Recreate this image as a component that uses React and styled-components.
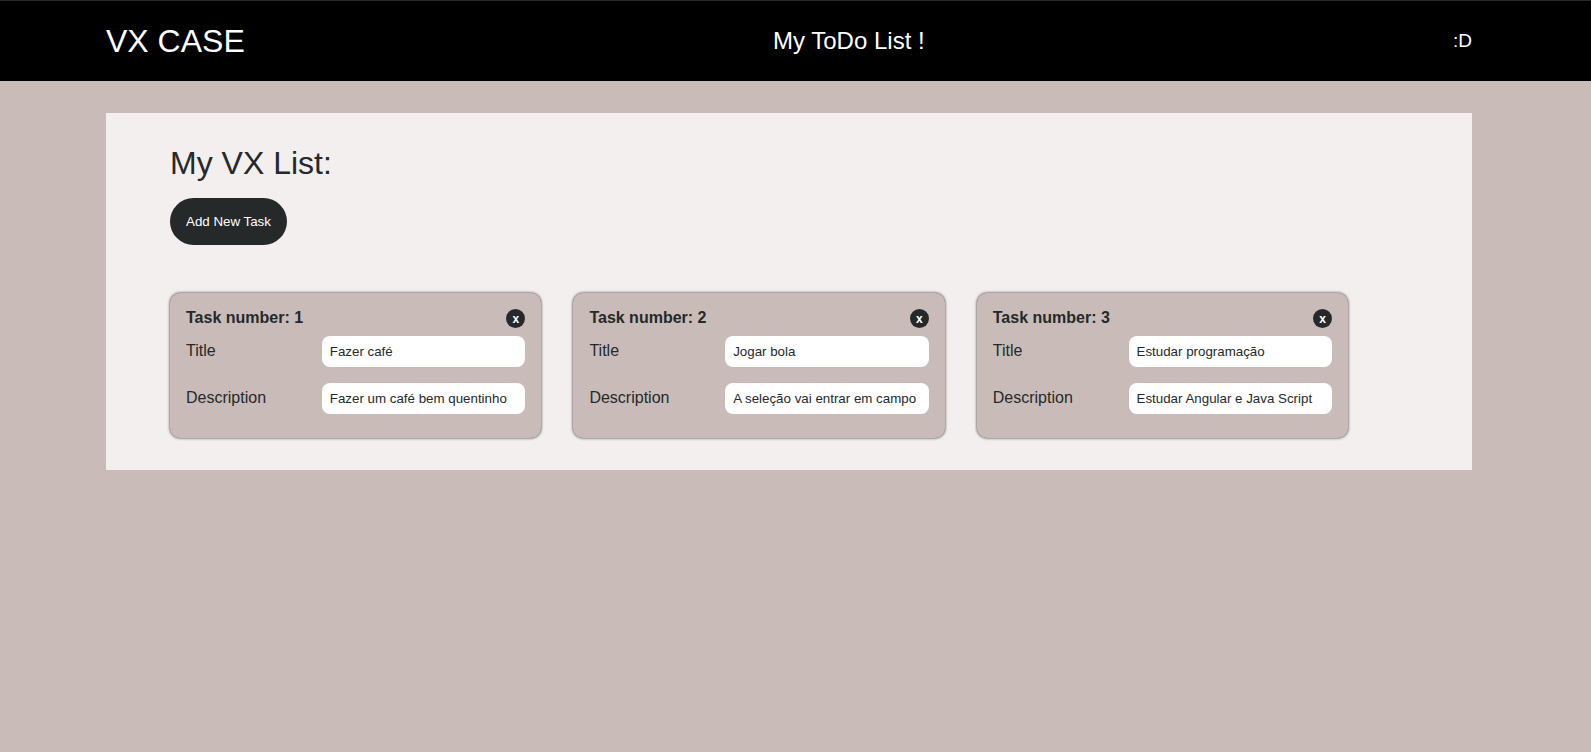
import React, { useState } from "react";
import styled, { createGlobalStyle } from "styled-components";

const GlobalStyle = createGlobalStyle`
  *, *::before, *::after { box-sizing: border-box; }
  body {
    margin: 0;
    background: #c9bcb8;
    color: #25292a;
    font-family: "Liberation Sans", Arial, sans-serif;
    font-size: 16px;
    line-height: 24px;
  }
  button, input { font-family: inherit; }
`;

const Header = styled.header`
  display: flex;
  align-items: center;
  justify-content: space-between;
  min-height: 81px;
  padding: 0 119px 0 106px;
  border-top: 1px solid #25292a;
  background: #000;
  color: #fff;
`;

const Brand = styled.div`
  font-size: 32px;
  line-height: 40px;
`;

const PageName = styled.div`
  font-size: 24px;
  line-height: 32px;
`;

const Smiley = styled.div`
  font-size: 19px;
  line-height: 24px;
`;

const Panel = styled.main`
  margin: 32px 119px 32px 106px;
  padding: 32px 64px;
  background: #f3efee;
`;

const Heading = styled.h1`
  margin: 0 0 16px;
  font-size: 32px;
  font-weight: 400;
  line-height: 37px;
`;

const AddButton = styled.button`
  display: block;
  height: 47px;
  padding: 0 16px;
  border: 0;
  border-radius: 24px;
  background: #25292a;
  color: #fff;
  font-weight: 400;
  cursor: pointer;
`;

const TaskList = styled.section`
  display: flex;
  flex-wrap: wrap;
  gap: 32px;
  margin-top: 48px;
`;

const Card = styled.article`
  flex: 0 0 30%;
  padding: 16px 16px 24px;
  border-radius: 10px;
  background: #c9bcb8;
  box-shadow: 0 0 3px #25292a;
`;

const CardHeader = styled.div`
  display: flex;
  align-items: flex-start;
  justify-content: space-between;
  height: 27px;
`;

const CardTitle = styled.h2`
  margin: 0;
  font-size: 16px;
  line-height: 18px;
`;

const RemoveButton = styled.button`
  width: 19px;
  height: 19px;
  padding: 0;
  border: 0;
  border-radius: 50%;
  background: #25292a;
  color: #fff;
  font-size: 12px;
  font-weight: 700;
  line-height: 18px;
  cursor: pointer;
`;

const Fields = styled.div`
  display: grid;
  gap: 16px;
`;

const Field = styled.div`
  display: grid;
  grid-template-columns: 2fr 3fr;
  align-items: center;
`;

const Label = styled.label`
  line-height: 30px;
  align-self: start;
`;

const TextInput = styled.input`
  width: 100%;
  height: 31px;
  padding: 0 8px;
  border: 0;
  border-radius: 8px;
  background: #fff;
  color: #25292a;
`;

const initialTasks = [
  { id: 1, title: "Fazer café", description: "Fazer um café bem quentinho" },
  { id: 2, title: "Jogar bola", description: "A seleção vai entrar em campo" },
  { id: 3, title: "Estudar programação", description: "Estudar Angular e Java Script" },
];

function TaskField({ id, label, value, onChange }) {
  return (
    <Field>
      <Label htmlFor={id}>{label}</Label>
      <TextInput id={id} value={value} onChange={(e) => onChange(e.target.value)} />
    </Field>
  );
}

function TaskCard({ task, number, onChange, onRemove }) {
  return (
    <Card>
      <CardHeader>
        <CardTitle>Task number: {number}</CardTitle>
        <RemoveButton type="button" onClick={onRemove}>x</RemoveButton>
      </CardHeader>
      <Fields>
        <TaskField
          id={`title-${task.id}`}
          label="Title"
          value={task.title}
          onChange={(title) => onChange({ ...task, title })}
        />
        <TaskField
          id={`description-${task.id}`}
          label="Description"
          value={task.description}
          onChange={(description) => onChange({ ...task, description })}
        />
      </Fields>
    </Card>
  );
}

export default function App() {
  const [tasks, setTasks] = useState(initialTasks);
  const add = () =>
    setTasks((list) => [...list, { id: Date.now(), title: "", description: "" }]);
  const update = (next) =>
    setTasks((list) => list.map((t) => (t.id === next.id ? next : t)));
  const remove = (id) => setTasks((list) => list.filter((t) => t.id !== id));

  return (
    <>
      <GlobalStyle />
      <Header>
        <Brand>VX CASE</Brand>
        <PageName>My ToDo List !</PageName>
        <Smiley>:D</Smiley>
      </Header>
      <Panel>
        <Heading>My VX List:</Heading>
        <AddButton type="button" onClick={add}>Add New Task</AddButton>
        <TaskList>
          {tasks.map((task, i) => (
            <TaskCard
              key={task.id}
              task={task}
              number={i + 1}
              onChange={update}
              onRemove={() => remove(task.id)}
            />
          ))}
        </TaskList>
      </Panel>
    </>
  );
}
